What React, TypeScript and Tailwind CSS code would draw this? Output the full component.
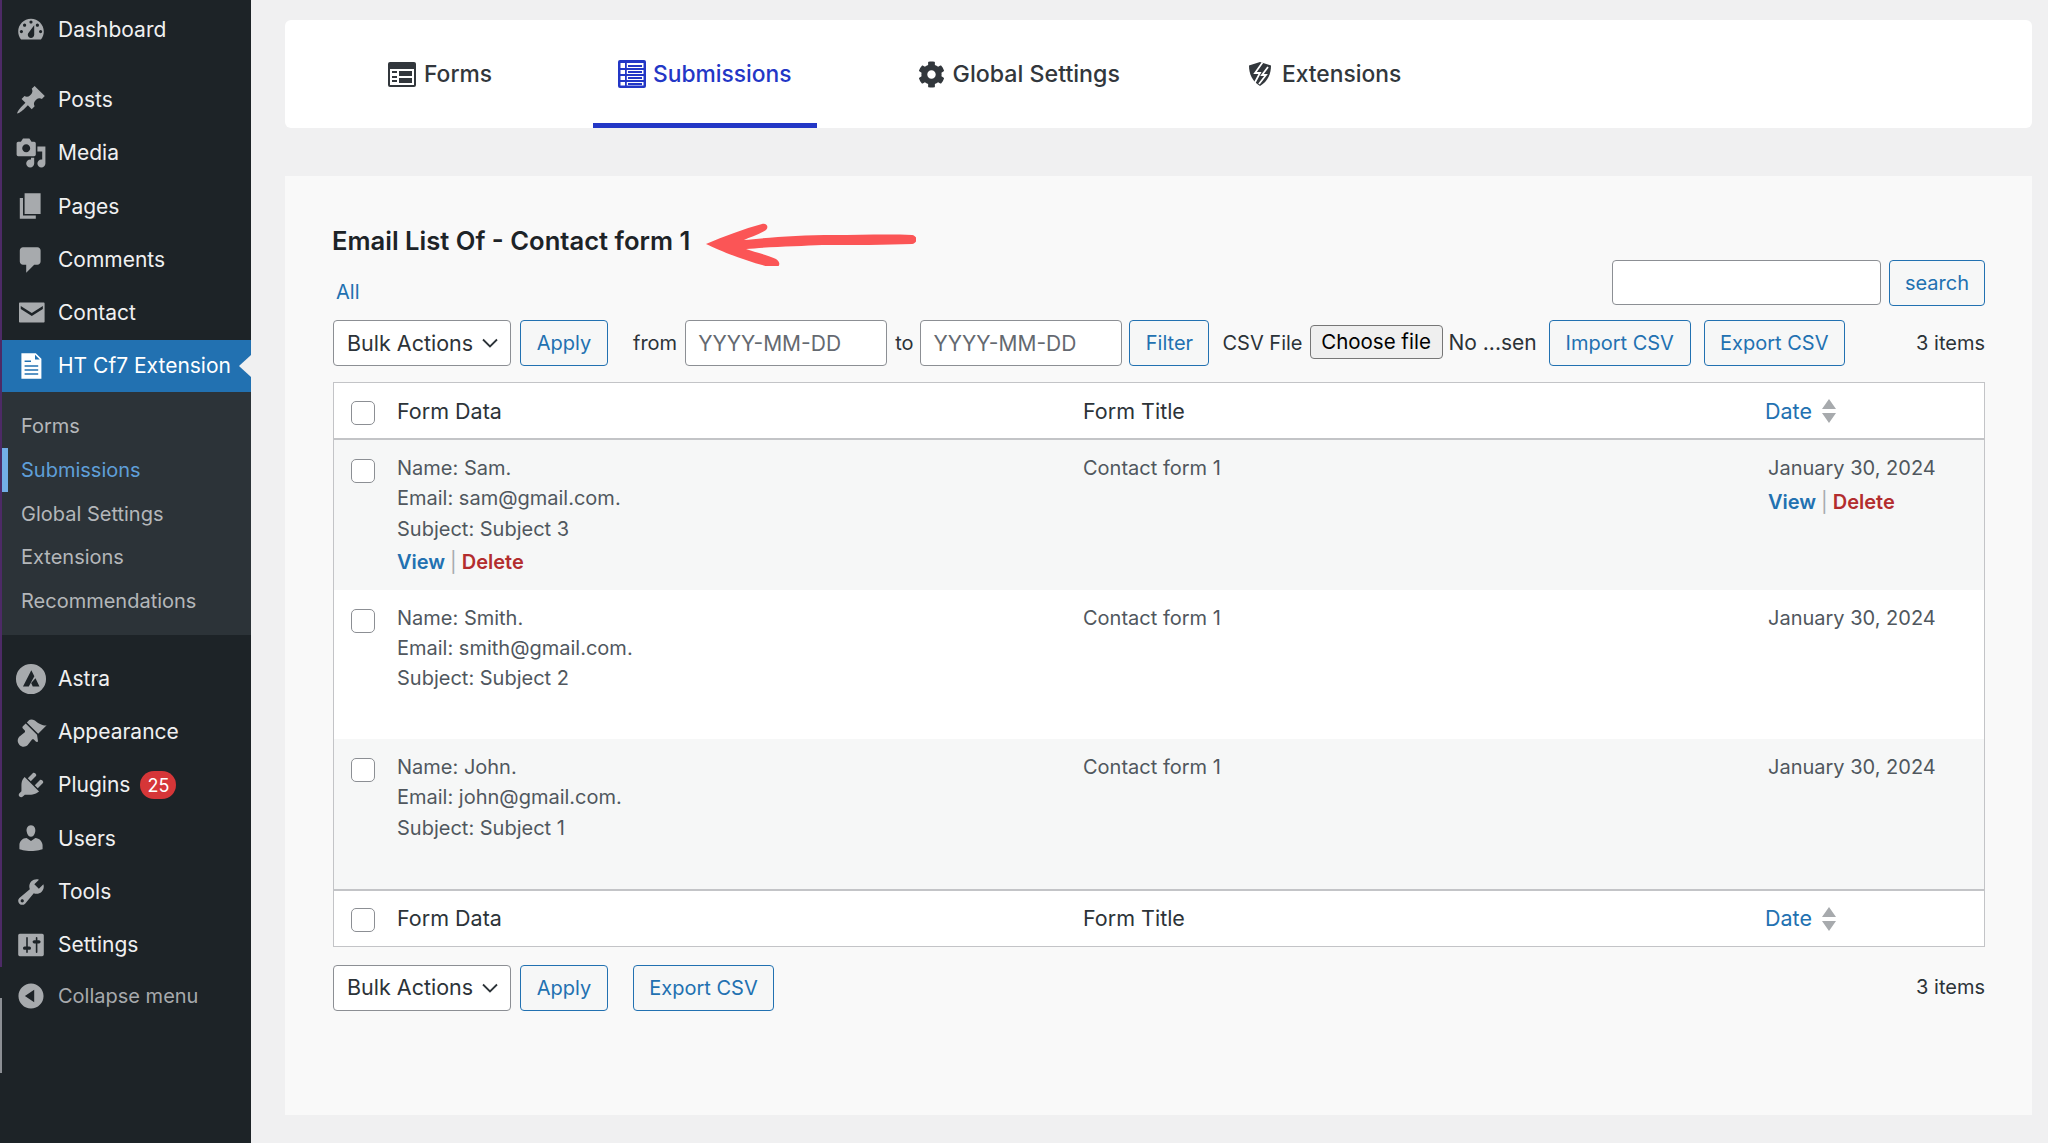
import { FaCog } from 'react-icons/fa';

const paths: Record<string, string> = {
  dashboard: 'M3.76 16h12.48c1.1-1.37 1.76-3.11 1.76-5 0-4.42-3.58-8-8-8s-8 3.58-8 8c0 1.89.66 3.63 1.76 5zM10 4c.55 0 1 .45 1 1s-.45 1-1 1-1-.45-1-1 .45-1 1-1zM6 6c.55 0 1 .45 1 1s-.45 1-1 1-1-.45-1-1 .45-1 1-1zm8 0c.55 0 1 .45 1 1s-.45 1-1 1-1-.45-1-1 .45-1 1-1zm-5.37 5.55L12 7v6c0 1.1-.9 2-2 2s-2-.9-2-2c0-.57.24-1.08.63-1.45zM4 10c.55 0 1 .45 1 1s-.45 1-1 1-1-.45-1-1 .45-1 1-1zm12 0c.55 0 1 .45 1 1s-.45 1-1 1-1-.45-1-1 .45-1 1-1z',
  posts: 'M10.44 3.02l1.82-1.82 6.36 6.35-1.83 1.82c-1.05-.68-2.48-.57-3.41.36l-.75.75c-.92.93-1.04 2.35-.35 3.41l-1.83 1.82-2.41-2.41-2.8 2.79c-.42.42-3.38 2.71-3.8 2.29s1.86-3.39 2.28-3.81l2.79-2.79L4.1 9.36l1.83-1.82c1.05.69 2.48.57 3.4-.36l.75-.75c.93-.92 1.05-2.35.36-3.41z',
  media: 'M13 11V4c0-.55-.45-1-1-1h-1.67L9 1H5L3.67 3H2c-.55 0-1 .45-1 1v7c0 .55.45 1 1 1h10c.55 0 1-.45 1-1zM7 4.5c1.38 0 2.5 1.12 2.5 2.5S8.38 9.5 7 9.5 4.5 8.38 4.5 7 5.62 4.5 7 4.5zM14 6h5v10.5c0 1.38-1.12 2.5-2.5 2.5S14 17.88 14 16.5s1.12-2.5 2.5-2.5c.17 0 .34.02.5.05V9h-3V6zm-4 8.05V13h2v3.5c0 1.38-1.12 2.5-2.5 2.5S7 17.88 7 16.5 8.12 14 9.5 14c.17 0 .34.02.5.05z',
  pages: 'M6 15V2h10v13H6zm-1 1h8v2H3V5h2v11z',
  comments: 'M5 2h9c1.1 0 2 .9 2 2v7c0 1.1-.9 2-2 2h-2l-5 5v-5H5c-1.1 0-2-.9-2-2V4c0-1.1.9-2 2-2z',
  contact: 'M3 3.5h15c.3 0 .5.2.5.5v11.5c0 .3-.2.5-.5.5H3c-.3 0-.5-.2-.5-.5V4c0-.3.2-.5.5-.5zm.6 2.2v1.8l6.9 4.3 6.9-4.3V5.7l-6.9 4.3z',
  appearance: 'M14.48 11.06L7.41 3.99l1.5-1.5c.5-.56 2.3-.47 3.51.32 1.21.8 1.43 1.28 2.91 2.1 1.18.64 2.45 1.26 4.45.85zm-.71.71L6.7 4.7 4.93 6.47c-.39.39-.39 1.02 0 1.41l1.06 1.06c.39.39.39 1.03 0 1.42-.6.6-1.43 1.11-2.21 1.69-.35.26-.7.53-1.01.84-1.43 1.43-1.4 3.75.03 5.18 1.43 1.43 3.75 1.46 5.18.03.31-.31.58-.66.84-1.01.58-.78 1.09-1.61 1.69-2.21.39-.39 1.03-.39 1.42 0l1.06 1.06c.39.39 1.02.39 1.41 0z',
  plugins: 'M13.11 4.36L9.87 7.6 8 5.73l3.24-3.24c.35-.34 1.05-.2 1.56.32.52.51.66 1.21.31 1.55zm-8 1.77l.91-1.12 9.01 9.01-1.19.84c-.71.71-2.63 1.16-3.82 1.16H6.14L4.9 17.26c-.59.59-1.54.59-2.12 0-.59-.58-.59-1.53 0-2.12l1.24-1.24v-3.88c0-1.13.4-3.19 1.09-3.89zm7.26 3.97l3.24-3.24c.34-.35 1.04-.21 1.55.31.52.51.66 1.21.31 1.55l-3.24 3.25z',
  users: 'M10 9.25c-2.27 0-2.73-3.44-2.73-3.44C7 4.02 7.82 2 9.97 2c2.16 0 2.98 2.02 2.71 3.81 0 0-.41 3.44-2.68 3.44zm0 2.57L12.72 10c2.39 0 4.52 2.33 4.52 4.53v2.49s-3.65 1.13-7.24 1.13c-3.65 0-7.24-1.13-7.24-1.13v-2.49c0-2.25 1.94-4.48 4.47-4.48z',
  tools: 'M16.68 9.77c-1.34 1.34-3.3 1.67-4.95.99l-5.41 6.52c-.99.99-2.59.99-3.58 0s-.99-2.59 0-3.57l6.52-5.42c-.68-1.65-.35-3.61.99-4.95 1.28-1.28 3.12-1.62 4.72-1.06l-2.89 2.89 2.82 2.82 2.86-2.87c.53 1.58.18 3.39-1.08 4.65zM3.81 16.21c.4.39 1.04.39 1.43 0 .4-.4.4-1.04 0-1.43-.39-.4-1.03-.4-1.43 0-.39.39-.39 1.03 0 1.43z',
  settings: 'M18 16V4c0-.55-.45-1-1-1H3c-.55 0-1 .45-1 1v12c0 .55.45 1 1 1h14c.55 0 1-.45 1-1zM8 11h1c.55 0 1 .45 1 1s-.45 1-1 1H8v1.5c0 .28-.22.5-.5.5s-.5-.22-.5-.5V13H6c-.55 0-1-.45-1-1s.45-1 1-1h1V5.5c0-.28.22-.5.5-.5s.5.22.5.5V11zm5-2h-1c-.55 0-1-.45-1-1s.45-1 1-1h1V5.5c0-.28.22-.5.5-.5s.5.22.5.5V7h1c.55 0 1 .45 1 1s-.45 1-1 1h-1v5.5c0 .28-.22.5-.5.5s-.5-.22-.5-.5V9z',
  collapse: 'M10 2.16c4.33 0 7.84 3.51 7.84 7.84s-3.51 7.84-7.84 7.84S2.16 14.33 2.16 10 5.71 2.16 10 2.16zm2 11.72V6.12L6.18 9.97z',
  astra: 'M10 .6a9.4 9.4 0 1 0 0 18.8A9.4 9.4 0 0 0 10 .6zM10.2 4.6l1.9 3.7-3.5 6.4H5zm2.6 5l2.5 5.1h-4.2l-1-2.2z',
  doc: 'M4 2h9l3.5 3.5V18H4zm8.5 1v3h3zM6 6.5v1h4v-1zm0 3v1h8.5v-1zm0 2.5v1h8.5v-1zm0 2.5v1h8.5v-1z',
};

const DashIcon = ({ name, className }: { name: string; className: string }) => (
  <svg viewBox="0 0 20 20" fill="currentColor" fillRule="evenodd" className={className}>
    <path d={paths[name]} />
  </svg>
);

const MenuRow = ({ icon, label, badge }: { icon: string; label: string; badge?: string }) => (
  <div className="flex h-[53.25px] items-center pl-[13px] text-[21px] text-[#f0f0f1]">
    <DashIcon name={icon} className="h-[32px] w-[32px] text-[#a7aaad]" />
    <span className="ml-[11px]">{label}</span>
    {badge && (
      <span className="ml-[10px] flex h-[28px] w-[36px] items-center justify-center rounded-full bg-[#d63638] text-[18px] text-white">
        {badge}
      </span>
    )}
  </div>
);

const Sidebar = () => (
  <aside className="flex h-[1143px] w-[251px] shrink-0 bg-[#1d2327]">
    <div className="flex w-[2px] shrink-0 flex-col">
      <div className="h-[967px] bg-[#4d2a66]" />
      <div className="h-[31px] bg-[#1d2327]" />
      <div className="h-[75px] bg-[#8c8f94]" />
    </div>
    <div className="min-w-0 flex-1 pt-[3px]">
      <MenuRow icon="dashboard" label="Dashboard" />
      <div className="h-[17px]" />
      <MenuRow icon="posts" label="Posts" />
      <MenuRow icon="media" label="Media" />
      <MenuRow icon="pages" label="Pages" />
      <MenuRow icon="comments" label="Comments" />
      <MenuRow icon="contact" label="Contact" />
      <div className="relative flex h-[52px] items-center bg-[#2271b1] pl-[13px] text-[21px] text-white">
        <DashIcon name="doc" className="h-[32px] w-[32px] text-white" />
        <span className="ml-[11px] whitespace-nowrap">HT Cf7 Extension</span>
        <span className="absolute right-0 top-[15px] h-0 w-0 border-y-[11px] border-r-[12px] border-y-transparent border-r-[#f0f0f1]" />
      </div>
      <div className="bg-[#2c3338] pb-[12px] pt-[13px] text-[20px] text-[#b4b7ba]">
        {['Forms', 'Submissions', 'Global Settings', 'Extensions', 'Recommendations'].map((item) => (
          <div
            key={item}
            className={
              item === 'Submissions'
                ? 'flex h-[43.7px] items-center border-l-[6px] border-[#72aee6] pl-[13px] text-[#5f9fd8]'
                : 'flex h-[43.7px] items-center pl-[19px]'
            }
          >
            {item}
          </div>
        ))}
      </div>
      <div className="h-[17px]" />
      <MenuRow icon="astra" label="Astra" />
      <MenuRow icon="appearance" label="Appearance" />
      <MenuRow icon="plugins" label="Plugins" badge="25" />
      <MenuRow icon="users" label="Users" />
      <MenuRow icon="tools" label="Tools" />
      <MenuRow icon="settings" label="Settings" />
      <div className="flex h-[50px] items-center pl-[13px] text-[20px] text-[#a7aaad]">
        <DashIcon name="collapse" className="h-[32px] w-[32px] text-[#a7aaad]" />
        <span className="ml-[11px]">Collapse menu</span>
      </div>
    </div>
  </aside>
);

const FormsIcon = () => (
  <svg viewBox="0 0 28 25" className="h-[25px] w-[28px]">
    <rect width="28" height="25" rx="2" fill="#32373c" />
    <path d="M2 7h24v16H2z" fill="#fff" />
    <path d="M4 9h5v2H4zM4 14h5v2H4zM11 9h13v5H11zM11 16h13v5H11zM4 18h5v2H4z" fill="#32373c" />
  </svg>
);

const ListIcon = () => (
  <svg viewBox="0 0 28 28" className="h-[28px] w-[28px]">
    <rect width="28" height="28" rx="2" fill="#2337c6" />
    <path d="M2.5 3h23v5h-23zM2.5 10h23v4h-23zM2.5 16h23v4h-23zM2.5 22h23v3.5h-23z" fill="#fff" />
    <path d="M7 2v24h1.8V2z" fill="#2337c6" />
    <path d="M10 5h14v2H10zM10 11h14v2H10zM10 17h14v2H10zM10 23h14v2H10z" fill="#2337c6" />
  </svg>
);

const ShieldIcon = () => (
  <svg viewBox="0 0 24 26" className="h-[26px] w-[24px]">
    <path d="M12 1l11 3.5C23 13 20 20 12 25 4 20 1 13 1 4.5z" fill="#32373c" />
    <path d="M14.5 1.5L7 12h5l-7.5 14M20 6l-6 8h4l-7 9" fill="none" stroke="#fff" strokeWidth="1.8" />
  </svg>
);

const tabs = [
  { label: 'Forms', icon: <FormsIcon />, active: false, extra: 'text-[22.8px]' },
  { label: 'Submissions', icon: <ListIcon />, active: true, extra: '' },
  { label: 'Global Settings', icon: <FaCog className="h-[27px] w-[27px] text-[#32373c]" />, active: false, extra: 'text-[23.2px]' },
  { label: 'Extensions', icon: <ShieldIcon />, active: false, extra: 'ml-[2px] gap-[10px] text-[22.8px]' },
];

const Tabs = () => (
  <div className="flex h-[108px] gap-[76px] rounded-[6px] bg-white pl-[78px]">
    {tabs.map((tab) => (
      <div
        key={tab.label}
        className={
          tab.active
            ? 'flex h-full items-center gap-[7px] border-b-[5px] border-[#2337c6] px-[25px] pt-[5px] text-[22.8px] font-medium text-[#2337c6]'
            : `flex h-full items-center gap-[8px] px-[25px] font-medium text-[#32373c] ${tab.extra}`
        }
      >
        {tab.icon}
        <span>{tab.label}</span>
      </div>
    ))}
  </div>
);

const Arrow = () => (
  <svg viewBox="0 0 212 44" className="ml-[14px] h-[44px] w-[212px] translate-y-[3px]">
    <path
      d="M2 22C20 14 40 7 58 2c5-1 7 3 4 6-8 5-16 7-22 10 20-2 55-5 90-5 25 0 55-1 78 0 6 1 6 8 0 9-25 1-60 1-90 1-20 1-55 2-76 4 8 3 22 6 30 10 6 4 3 9-2 9-20-4-52-16-68-24z"
      fill="#fb5556"
    />
  </svg>
);

const OutlineButton = ({ label, className }: { label: string; className: string }) => (
  <button className={`flex h-[46px] items-center justify-center rounded-[4px] border-[1.5px] border-[#2271b1] bg-[#f6f7f7] text-[20px] text-[#2271b1] ${className}`}>
    {label}
  </button>
);

const BulkSelect = () => (
  <div className="flex h-[46px] w-[178px] items-center justify-between rounded-[4px] border-[1.5px] border-[#8c8f94] bg-white pl-[13px] pr-[12px] text-[21.5px] text-[#2c3338]">
    <span>Bulk Actions</span>
    <svg viewBox="0 0 16 10" className="h-[10px] w-[16px]" fill="none" stroke="#2c3338" strokeWidth="1.8">
      <path d="M1 1.5l7 7 7-7" />
    </svg>
  </div>
);

const DateInput = () => (
  <input
    placeholder="YYYY-MM-DD"
    className="h-[46px] w-[202px] rounded-[4px] border-[1.5px] border-[#8c8f94] bg-white pl-[12px] text-[21px] outline-none placeholder:text-[#646970]"
  />
);

const Checkbox = () => (
  <input type="checkbox" className="h-[24px] w-[24px] appearance-none rounded-[5px] border-[1.5px] border-[#8c8f94] bg-white" />
);

const SortIcon = () => (
  <svg viewBox="0 0 14 24" className="ml-[10px] h-[24px] w-[14px]" fill="#a7aaad">
    <path d="M7 0l7 10H0zM7 24L0 14h14z" />
  </svg>
);

const RowActions = () => (
  <div className="flex h-[30px] items-center text-[20px] font-semibold">
    <span className="text-[#2271b1]">View</span>
    <span className="mx-[5px] font-normal text-[#a7aaad]">|</span>
    <span className="text-[#b32d2e]">Delete</span>
  </div>
);

const HeaderRow = ({ className }: { className: string }) => (
  <div className={`grid h-[57px] grid-cols-[17px_46px_686px_682px_1fr] items-center pt-[1px] text-[21.5px] text-[#2c3338] ${className}`}>
    <span />
    <div className="mt-[3px] flex items-center">
      <Checkbox />
    </div>
    <span>Form Data</span>
    <span>Form Title</span>
    <span className="flex items-center text-[#2271b1]">
      Date
      <SortIcon />
    </span>
  </div>
);

const submissions = [
  { name: 'Sam', email: 'sam@gmail.com', subject: 'Subject 3', actions: true, bg: 'bg-[#f6f7f7]' },
  { name: 'Smith', email: 'smith@gmail.com', subject: 'Subject 2', actions: false, bg: 'bg-white' },
  { name: 'John', email: 'john@gmail.com', subject: 'Subject 1', actions: false, bg: 'bg-[#f6f7f7]' },
];

const SubmissionsTable = () => (
  <div className="border-[1.5px] border-[#c3c4c7] bg-white">
    <HeaderRow className="border-b-2 border-[#c3c4c7]" />
    {submissions.map((row) => (
      <div
        key={row.name}
        className={`grid h-[149.5px] grid-cols-[17px_46px_686px_685px_1fr] pt-[13px] text-[20px] leading-[30.3px] text-[#50575e] ${row.bg}`}
      >
        <span />
        <div className="pt-[6px]">
          <Checkbox />
        </div>
        <div>
          <p>Name: {row.name}.</p>
          <p>Email: {row.email}.</p>
          <p>Subject: {row.subject}</p>
          {row.actions && (
            <div className="mt-[3px]">
              <RowActions />
            </div>
          )}
        </div>
        <div>Contact form 1</div>
        <div>
          <p>January 30, 2024</p>
          {row.actions && (
            <div className="mt-[4px]">
              <RowActions />
            </div>
          )}
        </div>
      </div>
    ))}
    <HeaderRow className="border-t-2 border-[#c3c4c7]" />
  </div>
);

export default function App() {
  return (
    <div className="flex h-[1143px] w-[2048px] overflow-hidden bg-[#f0f0f1] font-[family-name:Inter,sans-serif]">
      <Sidebar />
      <main className="min-w-0 flex-1 pb-[28px] pl-[34px] pr-[16px] pt-[20px]">
        <Tabs />
        <section className="mt-[48px] h-[939px] bg-[#f9f9f9] pl-[48px] pr-[47px] pt-[50px]">
          <div className="flex h-[79px] items-end justify-between">
            <div className="-ml-[1px]">
              <div className="flex h-[30px] items-center">
                <h1 className="whitespace-nowrap text-[25.6px] font-semibold text-[#1d2327]">Email List Of - Contact form 1</h1>
                <Arrow />
              </div>
              <div className="mt-[23px] h-[26px] pl-[4px] text-[20px] leading-[26px] text-[#2271b1]">All</div>
            </div>
            <div className="flex translate-y-[1px] gap-[8px]">
              <input className="h-[45px] w-[269px] rounded-[4px] border-[1.5px] border-[#8c8f94] bg-white" />
              <OutlineButton label="search" className="h-[45px] w-[96px]" />
            </div>
          </div>

          <div className="mt-[15px] flex h-[46px] items-center text-[20px] text-[#2c3338]">
            <BulkSelect />
            <OutlineButton label="Apply" className="ml-[9px] w-[88px]" />
            <span className="ml-[25px] mr-[8px]">from</span>
            <DateInput />
            <span className="ml-[8px] mr-[7px]">to</span>
            <DateInput />
            <OutlineButton label="Filter" className="ml-[7px] w-[80px]" />
            <span className="ml-[13px]">CSV File</span>
            <button className="ml-[7px] h-[34px] w-[133px] -translate-y-[1px] rounded-[4px] border-[1.5px] border-[#767676] bg-[#efefef] text-[20.5px] text-black">Choose file</button>
            <span className="ml-[6px] text-[21px]">No ...sen</span>
            <OutlineButton label="Import CSV" className="ml-[12px] w-[142px]" />
            <OutlineButton label="Export CSV" className="ml-[13px] w-[141px]" />
            <span className="ml-auto">3 items</span>
          </div>

          <div className="mt-[16px]">
            <SubmissionsTable />
          </div>

          <div className="mt-[18px] flex h-[46px] items-center text-[20px] text-[#2c3338]">
            <BulkSelect />
            <OutlineButton label="Apply" className="ml-[9px] w-[88px]" />
            <OutlineButton label="Export CSV" className="ml-[25px] w-[141px]" />
            <span className="ml-auto -translate-y-[1px]">3 items</span>
          </div>
        </section>
      </main>
    </div>
  );
}
